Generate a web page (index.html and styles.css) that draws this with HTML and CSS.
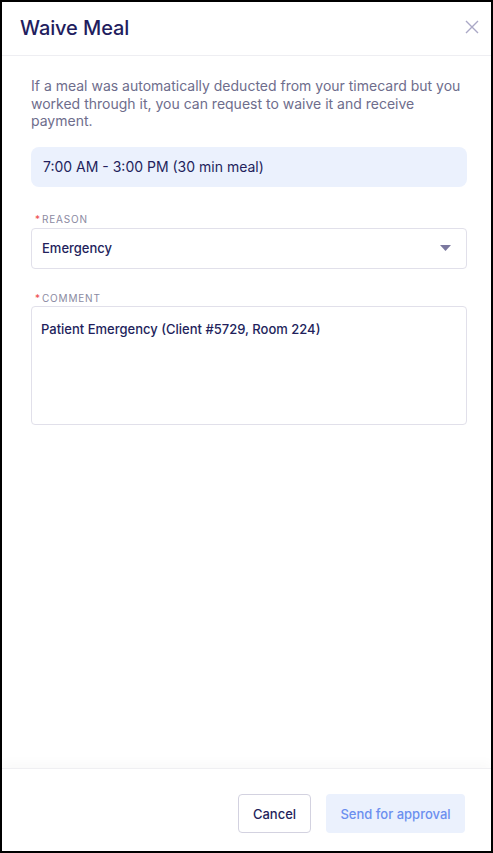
FILE: index.html
```html
<!DOCTYPE html>
<html>
<head>
<meta charset="utf-8">
<link rel="stylesheet" href="styles.css">
</head>
<body>
<div class="modal">
  <header class="modal-header">
    <h1 class="title">Waive Meal</h1>
    <button class="close" aria-label="Close">
      <svg width="14" height="14" viewBox="0 0 14 14"><path d="M1 1L13 13M13 1L1 13" stroke="#aaa8c6" stroke-width="1.4" fill="none"/></svg>
    </button>
  </header>
  <main class="modal-body">
    <p class="desc">If a meal was automatically deducted from your timecard but you worked through it, you can request to waive it and receive payment.</p>
    <div class="shift">7:00 AM - 3:00 PM (30 min meal)</div>
    <div class="field">
      <label class="label"><span class="req">*</span>REASON</label>
      <div class="select">
        <span>Emergency</span>
        <svg width="11" height="6" viewBox="0 0 11 6"><path d="M0 0H11L5.5 6Z" fill="#7b789f"/></svg>
      </div>
    </div>
    <div class="field field-comment">
      <label class="label"><span class="req">*</span>COMMENT</label>
      <div class="textarea">Patient Emergency (Client #5729, Room 224)</div>
    </div>
  </main>
  <footer class="modal-footer">
    <button class="btn btn-cancel">Cancel</button>
    <button class="btn btn-send">Send for approval</button>
  </footer>
</div>
</body>
</html>
```
FILE: styles.css
```css
* { box-sizing: border-box; }
html, body { margin: 0; padding: 0; }
body {
  font-family: Inter, "Noto Sans", sans-serif;
  color: #231f5c;
  background: #fff;
}
.modal {
  width: 493px;
  height: 853px;
  border: 2px solid #000;
  display: flex;
  flex-direction: column;
  background: #fff;
}
.modal-header {
  height: 54px;
  border-bottom: 1px solid #eeeef2;
  display: flex;
  align-items: center;
  justify-content: space-between;
  padding: 0 12px 2px 18px;
}
.title {
  margin: 0;
  font-size: 20px;
  font-weight: 500;
  color: #221d5e;
  letter-spacing: -0.1px;
}
.close {
  background: none;
  border: 0;
  padding: 0;
  width: 14px;
  height: 14px;
  display: flex;
  margin-bottom: 1px;
}
.modal-body {
  flex: 1;
  padding: 21px 24px 0 29px;
}
.desc {
  margin: 0;
  font-size: 14px;
  line-height: 17.5px;
  color: #6e6d8c;
}
.shift {
  margin-top: 17px;
  height: 40px;
  background: #ebf1fd;
  border-radius: 8px;
  padding: 0 12px;
  display: flex;
  align-items: center;
  font-size: 14px;
  color: #231f5c;
}
.field { margin-top: 26px; }
.field-comment { margin-top: 23px; }
.label {
  display: flex;
  align-items: center;
  height: 12px;
  font-size: 10px;
  letter-spacing: 0.8px;
  color: #8b8aa2;
  padding-left: 4px;
}
.req { color: #ee4b4b; margin-right: 2px; letter-spacing: 0; }
.select {
  margin-top: 3px;
  height: 41px;
  border: 1px solid #e1e0ea;
  border-radius: 4px;
  display: flex;
  align-items: center;
  justify-content: space-between;
  padding: 0 15px 0 10px;
  font-size: 13px;
  font-weight: 500;
  color: #231f5c;
}
.textarea {
  margin-top: 2px;
  height: 119px;
  border: 1px solid #e1e0ea;
  border-radius: 4px;
  padding: 14px 9px;
  font-size: 13px;
  font-weight: 500;
  line-height: 17px;
  color: #231f5c;
}
.modal-footer {
  height: 83px;
  border-top: 1px solid #efeff2;
  box-shadow: 0 -6px 10px rgba(0,0,0,0.025);
  display: flex;
  align-items: center;
  justify-content: flex-end;
  gap: 15px;
  padding: 7px 26px 0 0;
}
.btn {
  font-family: Inter, "Noto Sans", sans-serif;
  font-size: 13px;
  font-weight: 500;
  height: 39px;
  border-radius: 4px;
  cursor: pointer;
}
.btn-cancel {
  background: #fff;
  border: 1px solid #d3d2e0;
  color: #231f5c;
  width: 73px;
  padding: 0;
}
.btn-send {
  background: #ebf1fd;
  border: 0;
  color: #6b8fef;
  width: 139px;
  padding: 0;
}
```
